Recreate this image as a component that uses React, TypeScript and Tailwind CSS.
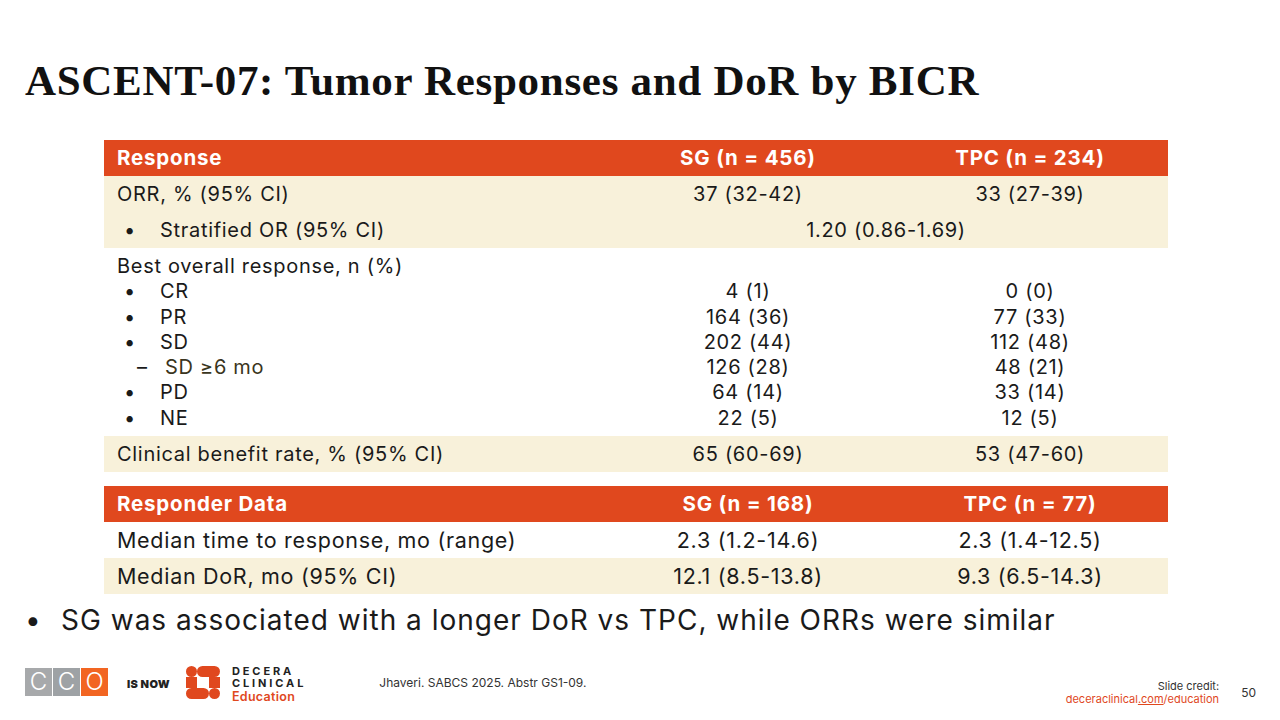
import React from "react"

const body = { fontFamily: "Inter, 'Noto Sans', sans-serif" }

const bestRows = [
  { label: "CR", sg: "4 (1)", tpc: "0 (0)", sub: false },
  { label: "PR", sg: "164 (36)", tpc: "77 (33)", sub: false },
  { label: "SD", sg: "202 (44)", tpc: "112 (48)", sub: false },
  { label: "SD ≥6 mo", sg: "126 (28)", tpc: "48 (21)", sub: true },
  { label: "PD", sg: "64 (14)", tpc: "33 (14)", sub: false },
  { label: "NE", sg: "22 (5)", tpc: "12 (5)", sub: false },
]

const cols = "grid grid-cols-[500px_288px_276px]"

function HeaderRow({ a, b, c }: { a: string; b: string; c: string }) {
  return (
    <div className={`${cols} h-[36px] items-center bg-[#e0481e] text-white font-bold text-[20.5px] tracking-[0.8px]`}>
      <div className="pl-[13px]">{a}</div>
      <div className="text-center">{b}</div>
      <div className="text-center">{c}</div>
    </div>
  )
}

function Row({ a, b, c, cream, big }: { a: string; b: string; c: string; cream?: boolean; big?: boolean }) {
  return (
    <div
      className={`${cols} h-[36px] items-center text-[#1a1a1a] ${big ? "text-[21.5px] tracking-[0.7px]" : "text-[20px] tracking-[0.7px]"} ${cream ? "bg-[#f8f1da]" : "bg-white"}`}
    >
      <div className="pl-[13px]">{a}</div>
      <div className="text-center">{b}</div>
      <div className="text-center">{c}</div>
    </div>
  )
}

function CcoLogo() {
  return (
    <div className="flex gap-[1px] h-[28px]">
      <div className="w-[27px] bg-[#a7a9ab] flex items-center justify-center text-white text-[24px] font-light leading-none" style={body}>C</div>
      <div className="w-[27px] bg-[#9ea2a5] flex items-center justify-center text-white text-[24px] font-light leading-none" style={body}>C</div>
      <div className="w-[27px] bg-[#f26522] flex items-center justify-center text-white text-[24px] font-light leading-none" style={body}>O</div>
    </div>
  )
}

function DeceraMark() {
  return (
    <svg width="34" height="33" viewBox="0 0 34 33">
      <g fill="#e0481e">
        <circle cx="5.5" cy="5.5" r="5.5" />
        <rect x="11" y="0" width="23" height="11" rx="5.5" />
        <rect x="0" y="11" width="11" height="11" />
        <rect x="23" y="11" width="11" height="11" />
        <rect x="0" y="22" width="23" height="11" rx="5.5" />
        <circle cx="28.5" cy="27.5" r="5.5" />
      </g>
    </svg>
  )
}

export default function App() {
  return (
    <div className="w-[1280px] h-[720px] bg-white flex flex-col overflow-hidden text-[#1a1a1a]" style={body}>
      {/* Title */}
      <h1
        className="pl-[25px] pt-[57px] text-[43px] font-bold leading-[48px] text-[#111] tracking-[0.7px]"
        style={{ fontFamily: "'Liberation Serif', 'Times New Roman', serif" }}
      >
        ASCENT-07: Tumor Responses and DoR by BICR
      </h1>

      {/* Table */}
      <div className="ml-[104px] mt-[35px] w-[1064px] flex flex-col">
        <HeaderRow a="Response" b="SG (n = 456)" c="TPC (n = 234)" />
        <Row a="ORR, % (95% CI)" b="37 (32-42)" c="33 (27-39)" cream />
        <div className={`${cols} h-[36px] items-center text-[20px] tracking-[0.7px] bg-[#f8f1da]`}>
          <div className="pl-[20px] flex">
            <span className="w-[36px]">•</span>
            <span>Stratified OR (95% CI)</span>
          </div>
          <div className="col-span-2 text-center">1.20 (0.86-1.69)</div>
        </div>

        <div className="flex flex-col pt-[6px] pb-[5px] text-[20px] tracking-[0.7px] leading-[25.3px]">
          <div className={cols}>
            <div className="pl-[13px]">Best overall response, n (%)</div>
            <div />
            <div />
          </div>
          {bestRows.map((r) => (
            <div key={r.label} className={cols}>
              {r.sub ? (
                <div className="pl-[33px] flex">
                  <span className="w-[28px]">–</span>
                  <span className="text-[#3a3520]">{r.label}</span>
                </div>
              ) : (
                <div className="pl-[20px] flex">
                  <span className="w-[36px]">•</span>
                  <span>{r.label}</span>
                </div>
              )}
              <div className="text-center">{r.sg}</div>
              <div className="text-center">{r.tpc}</div>
            </div>
          ))}
        </div>

        <Row a="Clinical benefit rate, % (95% CI)" b="65 (60-69)" c="53 (47-60)" cream />

        <div className="mt-[14px]">
          <HeaderRow a="Responder Data" b="SG (n = 168)" c="TPC (n = 77)" />
        </div>
        <Row a="Median time to response, mo (range)" b="2.3 (1.2-14.6)" c="2.3 (1.4-12.5)" big />
        <Row a="Median DoR, mo (95% CI)" b="12.1 (8.5-13.8)" c="9.3 (6.5-14.3)" cream big />
      </div>

      {/* Takeaway */}
      <div className="flex items-center pl-[25px] mt-[8px] text-[28px] leading-[36px] tracking-[1px]">
        <span className="w-[36px]">•</span>
        <span>SG was associated with a longer DoR vs TPC, while ORRs were similar</span>
      </div>

      {/* Footer */}
      <div className="flex items-start mt-[28px] pl-[25px] pr-[24px]">
        <div className="mt-[2px]">
          <CcoLogo />
        </div>
        <div className="ml-[19px] mt-[10px] text-[11px] font-black tracking-[0.3px] text-[#222]">IS NOW</div>
        <div className="ml-[16px]">
          <DeceraMark />
        </div>
        <div className="ml-[12px] flex flex-col mt-[-1px]">
          <span className="h-[12px] text-[11px] leading-[12px] font-bold tracking-[2.9px] text-[#222]">DECERA</span>
          <span className="h-[12px] text-[11px] leading-[12px] font-bold tracking-[2.9px] text-[#222]">CLINICAL</span>
          <span className="h-[13px] mt-[1px] text-[12.5px] leading-[13px] font-semibold tracking-[0.3px] text-[#e0481e]">Education</span>
        </div>
        <div className="ml-[73px] mt-[8px] text-[12px] text-[#333]">Jhaveri. SABCS 2025. Abstr GS1-09.</div>
        <div className="ml-auto mt-[14px] flex flex-col items-end text-[11px] leading-[13px]">
          <span className="text-[#333]">Slide credit:</span>
          <span className="text-[#e0481e]">
            deceraclinical<span className="underline">.com</span>/education
          </span>
        </div>
        <div className="ml-[22px] mt-[18px] text-[12px] text-[#333]">50</div>
      </div>
    </div>
  )
}
